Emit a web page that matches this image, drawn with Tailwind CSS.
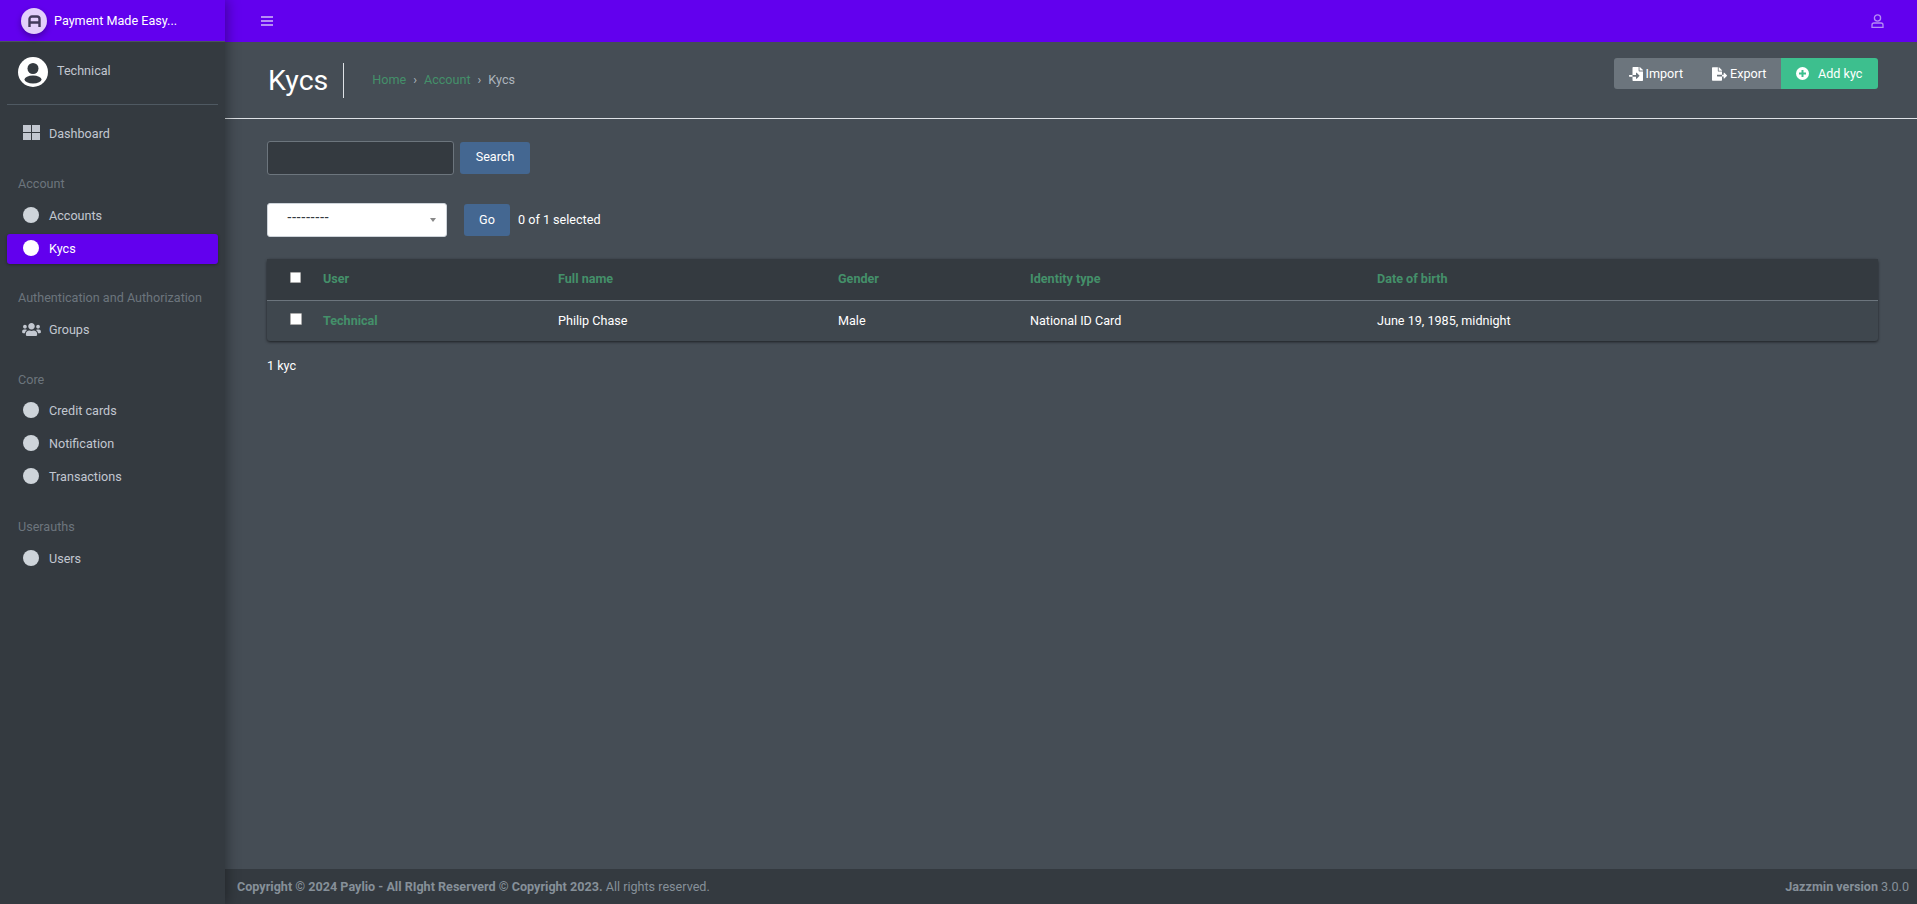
<!DOCTYPE html>
<html lang="en">
<head>
    <meta charset="UTF-8">
    <meta name="viewport" content="width=device-width, initial-scale=1.0">
    <title>Kycs</title>
    <script src="https://cdn.jsdelivr.net/npm/@tailwindcss/browser@4"></script>
</head>
<body class="h-[904px] overflow-hidden flex bg-[#454d55] font-['Roboto',sans-serif] text-[12.6px] leading-[19px] text-white">
    <!-- sidebar -->
    <aside class="w-[225px] shrink-0 flex flex-col bg-[#343a40] shadow-[2px_0_12px_rgba(0,0,0,0.35)] z-10">
        <div class="h-[42px] shrink-0 flex items-center pl-[21px] gap-[7px] bg-[#6200ee] border-b border-[#4b545c]">
            <div class="w-[26px] h-[26px] rounded-full bg-[#e3cffb] flex items-center justify-center shadow-[0_3px_6px_rgba(0,0,0,0.3)]">
                <svg width="13" height="12" viewBox="0 0 13 12" fill="none" stroke="#433a5c" stroke-width="2.4"><path d="M1.500 12V4A2.500 2.500 0 0 1 4 1.500H9A2.500 2.500 0 0 1 11.500 4V12M1.500 7.500H11.500"/></svg>
            </div>
            <span class="text-white">Payment Made Easy...</span>
        </div>
        <div class="mx-[7px] h-[63px] shrink-0 flex items-center pl-[11px] gap-[9px] border-b border-[#4f5962]">
            <svg class="w-[30px] h-[30px] -mt-[2px]" viewBox="0 0 30 30"><circle cx="15" cy="15" r="15" fill="#fff"/><circle cx="15" cy="11.500" r="5.500" fill="#343a40"/><ellipse cx="15" cy="22.500" rx="8.500" ry="4" fill="#343a40"/></svg>
            <span class="text-[#c2c7d0] -mt-[6px]">Technical</span>
        </div>
        <nav class="px-[7px] pt-[13px] text-[#c2c7d0]">
            <a class="h-[30px] flex items-center pl-[16px] gap-[9px]">
                <svg class="w-[17px] h-[15px] -mt-[2px]" viewBox="0 0 17 15" fill="#c2c7d0"><rect width="8" height="7"/><rect x="9" width="8" height="7"/><rect y="8" width="8" height="7"/><rect x="9" y="8" width="8" height="7"/></svg>
                <span>Dashboard</span>
            </a>
            <p class="mt-[24px] h-[24px] pl-[11px] text-[#6c757d] leading-[24px] whitespace-nowrap">Account</p>
            <a class="mt-[5px] h-[30px] flex items-center pl-[16px] pb-[2px] gap-[10px]"><span class="w-[16px] h-[16px] rounded-full bg-[#ced4da] -mt-[1px]"></span><span>Accounts</span></a>
            <a class="mt-[3px] h-[30px] flex items-center pl-[16px] pb-[2px] gap-[10px] bg-[#6200ee] rounded-[3px] text-white shadow-[0_1px_3px_rgba(0,0,0,0.3)]"><span class="w-[16px] h-[16px] rounded-full bg-white -mt-[1px]"></span><span>Kycs</span></a>
            <p class="mt-[22px] h-[24px] pl-[11px] text-[#6c757d] leading-[24px] whitespace-nowrap">Authentication and Authorization</p>
            <a class="mt-[5px] h-[30px] flex items-center pl-[14px] pb-[2px] gap-[7px]">
                <svg class="w-[21px] h-[15px]" viewBox="0 0 640 512" fill="#c2c7d0"><path d="M96 224c35.3 0 64-28.700 64-64s-28.700-64-64-64-64 28.700-64 64 28.700 64 64 64zm448 0c35.300 0 64-28.700 64-64s-28.700-64-64-64-64 28.700-64 64 28.700 64 64 64zm32 32h-64c-17.600 0-33.500 7.100-45.100 18.600 40.300 22.100 68.900 62 75.100 109.400h66c17.700 0 32-14.300 32-32v-32c0-35.300-28.700-64-64-64zm-256 0c61.900 0 112-50.100 112-112S381.900 32 320 32 208 82.100 208 144s50.100 112 112 112zm76.800 32h-8.300c-20.800 10-43.900 16-68.500 16s-47.600-6-68.500-16h-8.300C179.600 288 128 339.600 128 403.200V432c0 26.500 21.500 48 48 48h288c26.500 0 48-21.500 48-48v-28.800c0-63.600-51.600-115.200-115.200-115.200zm-223.700-13.400C161.500 263.100 145.600 256 128 256H64c-35.300 0-64 28.700-64 64v32c0 17.700 14.300 32 32 32h65.900c6.300-47.400 34.900-87.300 75.200-109.400z"/></svg>
                <span>Groups</span>
            </a>
            <p class="mt-[23px] h-[24px] pl-[11px] text-[#6c757d] leading-[24px]">Core</p>
            <a class="mt-[4px] h-[30px] flex items-center pl-[16px] pb-[2px] gap-[10px]"><span class="w-[16px] h-[16px] rounded-full bg-[#ced4da] -mt-[1px]"></span><span>Credit cards</span></a>
            <a class="mt-[3px] h-[30px] flex items-center pl-[16px] pb-[2px] gap-[10px]"><span class="w-[16px] h-[16px] rounded-full bg-[#ced4da] -mt-[1px]"></span><span>Notification</span></a>
            <a class="mt-[3px] h-[30px] flex items-center pl-[16px] pb-[2px] gap-[10px]"><span class="w-[16px] h-[16px] rounded-full bg-[#ced4da] -mt-[1px]"></span><span>Transactions</span></a>
            <p class="mt-[23px] h-[24px] pl-[11px] text-[#6c757d] leading-[24px]">Userauths</p>
            <a class="mt-[5px] h-[30px] flex items-center pl-[16px] pb-[2px] gap-[10px]"><span class="w-[16px] h-[16px] rounded-full bg-[#ced4da] -mt-[1px]"></span><span>Users</span></a>
        </nav>
    </aside>

    <div class="flex-1 min-w-0 flex flex-col">
        <!-- top navbar -->
        <header class="h-[42px] shrink-0 flex items-center justify-between pl-[36px] pr-[33px] bg-[#6200ee] text-[#b58cf5]">
            <svg width="13" height="12" viewBox="0 0 13 12" fill="currentColor"><rect width="12" height="2" y="1"/><rect width="12" height="2" y="5"/><rect width="12" height="2" y="9"/></svg>
            <svg width="13" height="14" viewBox="0 0 13 14" fill="none" stroke="currentColor" stroke-width="1.300"><circle cx="6.500" cy="4" r="3.100"/><path d="M1 13.300V11a2 2 0 0 1 2-2h7a2 2 0 0 1 2 2v2.300z"/></svg>
        </header>

        <main class="flex-1 min-h-0">
            <!-- page header -->
            <div class="h-[77px] flex items-start border-b border-[#dee2e6]">
                <h1 class="ml-[43px] mt-[21px] h-[35px] pr-[15px] border-r border-[#dee2e6] text-[28.5px] leading-[35px]">Kycs</h1>
                <div class="ml-[28px] mt-[28px] flex items-center gap-[7px]">
                    <a class="text-[#44906a]">Home</a><span class="text-[#adb5bd]">›</span><a class="text-[#44906a]">Account</a><span class="text-[#adb5bd]">›</span><span class="text-[#adb5bd]">Kycs</span>
                </div>
                <div class="ml-auto mr-[39px] mt-[16px] flex h-[31px] rounded-[3px] overflow-hidden">
                    <a class="w-[84px] flex items-center justify-end gap-[3px] pr-[15px] bg-[#6c757d]">
                        <svg width="14" height="14" viewBox="0 0 512 512" fill="#fff"><path d="M16 288c-8.800 0-16 7.200-16 16v32c0 8.800 7.200 16 16 16h112v-64zm489-183L407.100 7c-4.500-4.500-10.600-7-17-7H384v128h128v-6.100c0-6.300-2.500-12.400-7-16.900zm-153 31V0H152c-13.300 0-24 10.700-24 24v264h128v-65.200c0-14.300 17.300-21.400 27.400-11.300L379 308c6.600 6.700 6.600 17.400 0 24l-95.700 96.400c-10.100 10.100-27.400 3-27.400-11.300V352H128v136c0 13.300 10.700 24 24 24h336c13.300 0 24-10.700 24-24V160H376c-13.200 0-24-10.800-24-24z"/></svg>
                        <span>Import</span>
                    </a>
                    <a class="w-[83px] flex items-center gap-[3px] pl-[14px] bg-[#6c757d]">
                        <svg width="15" height="14" viewBox="0 0 576 512" fill="#fff"><path d="M384 121.900c0-6.300-2.500-12.400-7-16.900L279.100 7c-4.500-4.500-10.600-7-17-7H256v128h128zM571 308l-95.700-96.400c-10.100-10.100-27.400-3-27.400 11.300V288h-64v64h64v65.200c0 14.300 17.300 21.400 27.400 11.300L571 332c6.600-6.600 6.600-17.400 0-24zm-379 28v-32c0-8.800 7.200-16 16-16h176V160H248c-13.200 0-24-10.800-24-24V0H24C10.700 0 0 10.700 0 24v464c0 13.300 10.700 24 24 24h336c13.300 0 24-10.700 24-24V352H208c-8.800 0-16-7.200-16-16z"/></svg>
                        <span>Export</span>
                    </a>
                    <a class="w-[97px] flex items-center gap-[9px] pl-[15px] bg-[#3dbf8e]">
                        <svg width="13" height="13" viewBox="0 0 13 13"><circle cx="6.500" cy="6.500" r="6.500" fill="#fff"/><path d="M6.500 3v7M3 6.500h7" stroke="#3dbf8e" stroke-width="2"/></svg>
                        <span>Add kyc</span>
                    </a>
                </div>
            </div>

            <div class="pl-[42px] pr-[39px]">
                <!-- search -->
                <div class="mt-[22px] flex items-center gap-[6px]">
                    <input type="text" class="w-[187px] h-[34px] rounded-[3px] border border-[#6c757d] bg-[#343a40]">
                    <button class="w-[70px] h-[32px] pb-[3px] rounded-[3px] bg-[#446791]">Search</button>
                </div>
                <!-- actions -->
                <div class="mt-[28px] flex items-center">
                    <div class="w-[180px] h-[34px] rounded-[3px] border border-[#ced4da] bg-white flex items-center justify-between pl-[19px] pr-[10px] text-[#343a40] font-['Liberation_Sans',sans-serif] text-[14px]">
                        <span class="-mt-[5px]">---------</span>
                        <span class="w-0 h-0 border-x-[3.500px] border-x-transparent border-t-[4px] border-t-[#888]"></span>
                    </div>
                    <button class="ml-[17px] w-[46px] h-[32px] pb-[2px] rounded-[3px] bg-[#446791]">Go</button>
                    <span class="ml-[8px] -mt-[2px]">0 of 1 selected</span>
                </div>
                <!-- results -->
                <table class="mt-[22px] w-full table-fixed bg-[#3f474e] rounded-[3px] shadow-[0_1px_3px_rgba(0,0,0,0.6)]">
                    <thead class="bg-[#343a40]">
                        <tr class="h-[41px] border-b border-[#6c757d] text-left text-[#44906a]">
                            <th class="w-[56px] pl-[23px]"><input type="checkbox" class="block w-[11px] h-[11px] appearance-none bg-white border border-[#aaa] rounded-[1px] -mt-[4px]"></th>
                            <th class="w-[235px] font-bold pb-[2px]">User</th>
                            <th class="w-[280px] font-bold pb-[2px]">Full name</th>
                            <th class="w-[192px] font-bold pb-[2px]">Gender</th>
                            <th class="w-[347px] font-bold pb-[2px]">Identity type</th>
                            <th class="font-bold pb-[2px]">Date of birth</th>
                        </tr>
                    </thead>
                    <tbody>
                        <tr class="h-[41px]">
                            <td class="pl-[23px]"><input type="checkbox" class="block w-[12px] h-[12px] appearance-none bg-white border border-[#aaa] rounded-[1px] -mt-[3px]"></td>
                            <td class="font-bold text-[#44906a]">Technical</td>
                            <td>Philip Chase</td>
                            <td>Male</td>
                            <td>National ID Card</td>
                            <td>June 19, 1985, midnight</td>
                        </tr>
                    </tbody>
                </table>
                <p class="mt-[15px]">1 kyc</p>
            </div>
        </main>

        <!-- footer -->
        <footer class="h-[35px] shrink-0 flex items-center justify-between pl-[12px] pr-[8px] bg-[#343a40] text-[#869099]">
            <p><b>Copyright © 2024 Paylio - All RIght Reserverd © Copyright 2023.</b> All rights reserved.</p>
            <p><b>Jazzmin version</b> 3.0.0</p>
        </footer>
    </div>
</body>
</html>
